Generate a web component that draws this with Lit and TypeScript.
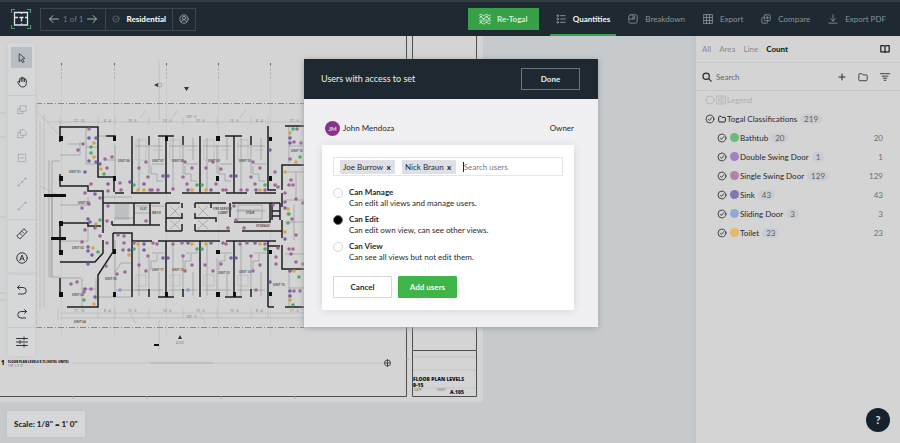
import { LitElement, html, svg, css } from "lit";
import { customElement, state } from "lit/decorators.js";
import { classMap } from "lit/directives/class-map.js";

type Pt = [number, number];

/* ---------- icons ---------- */

const ICONS: Record<string, unknown> = {
  left: svg`<path d="M21 12H3M10 5l-7 7 7 7"/>`,
  right: svg`<path d="M3 12h18M14 5l7 7-7 7"/>`,
  check: svg`<circle cx="12" cy="12" r="9.500"/><path d="M8 12.500l3 3 5.500-7"/>`,
  ring: svg`<circle cx="12" cy="12" r="9.500"/>`,
  user: svg`<circle cx="12" cy="12" r="10"/><circle cx="12" cy="9.500" r="4"/><path d="M5.500 19c1-4 3.500-5 6.500-5s5.500 1 6.500 5"/>`,
  waves: svg`<path d="M1 4c4-5 7 5 11 0s7 5 11 0M1 9.500c4-5 7 5 11 0s7 5 11 0M1 15c4-5 7 5 11 0s7 5 11 0M1 20.500c4-5 7 5 11 0s7 5 11 0"/><circle cx="4" cy="7" r="1"/><circle cx="15" cy="7" r="1"/><circle cx="9" cy="12" r="1"/><circle cx="20" cy="12" r="1"/><circle cx="4" cy="18" r="1"/><circle cx="15" cy="18" r="1"/>`,
  list: svg`<path d="M11 4h11M11 12h11M11 20h11" /><circle cx="4" cy="4" r="2"/><circle cx="4" cy="12" r="2"/><circle cx="4" cy="20" r="2"/>`,
  chart: svg`<rect x="2" y="2" width="20" height="20" rx="4"/><path d="M12 2v10H2M12 12h4V6"/>`,
  grid: svg`<rect x="1.500" y="1.500" width="21" height="21"/><path d="M8.500 1v22M15.500 1v22M1 8.500h22M1 15.500h22"/>`,
  copy: svg`<rect x="8" y="2" width="14" height="14" rx="2"/><path d="M8 8H4a2 2 0 0 0-2 2v10a2 2 0 0 0 2 2h10a2 2 0 0 0 2-2v-4M12 9h6M15 6v6"/>`,
  download: svg`<path d="M12 2v15M6 11l6 6 6-6M2 22h20"/>`,
  book: svg`<path d="M12 5v15M12 5C10 3.500 6 3.500 2 4v15c4-.5 8-.5 10 1 2-1.500 6-1.500 10-1V4c-4-.5-8-.5-10 1z"/>`,
  search: svg`<circle cx="10" cy="10" r="7.500"/><path d="M16 16l6 6"/>`,
  plus: svg`<path d="M12 3v18M3 12h18"/>`,
  folder: svg`<path d="M2 6a2 2 0 0 1 2-2h5l3 3h8a2 2 0 0 1 2 2v10a2 2 0 0 1-2 2H4a2 2 0 0 1-2-2z"/>`,
  filter: svg`<path d="M1 4h22M5 10h14M8 15h8M10 20h4"/>`,
  legend: svg`<rect x="1.500" y="2.500" width="21" height="19"/><path d="M7 7v10M11 7h6M11 12h6M11 17h6"/>`,
  cursor: svg`<path d="M6 2l13 11-6 1 4 7-4 2-3-7-4 4z"/>`,
  hand: svg`<path d="M7 13V6.500a1.700 1.700 0 0 1 3.400 0V4a1.700 1.700 0 0 1 3.400 0v1.500a1.700 1.700 0 0 1 3.400 0V8a1.600 1.600 0 0 1 3.300 0v7c0 4-3 7-7 7-3 0-5-1-7-4l-3-5c-1-2 1.500-3 2.500-1.500L7 13M10.400 6.500V11M13.800 5.500V11M17.200 8v3"/>`,
  shapeA: svg`<path d="M8 2h14v13H8zM8 9H2v12h12v-6"/>`,
  shapeB: svg`<path d="M9 2h8l5 5v8H9zM9 8H2v13h13v-6"/>`,
  minus: svg`<rect x="3" y="3" width="18" height="18" rx="1"/><path d="M7 12h10"/>`,
  line: svg`<path d="M4 20L20 4"/><circle cx="3.500" cy="20.500" r="1.500"/><circle cx="12" cy="12" r="1.500"/><circle cx="20.500" cy="3.500" r="1.500"/>`,
  curve: svg`<path d="M3 20c5 0 5-5 9-8s4-7 9-8"/><circle cx="3.500" cy="20" r="1.500"/><circle cx="20.500" cy="4" r="1.500"/>`,
  ruler: svg`<path d="M16.500 2L22 7.500 7.500 22 2 16.500zM12 7l3 3M8 11l3 3"/>`,
  text: svg`<circle cx="12" cy="12" r="10.500"/><path d="M7.500 17L12 6l4.500 11M9 13.500h6"/>`,
  undo: svg`<path d="M7 3L3 7l4 4M3 7h11a6.500 6.500 0 0 1 0 13H5"/>`,
  redo: svg`<path d="M17 3l4 4-4 4M21 7H10a6.500 6.500 0 0 0 0 13h9"/>`,
  sliders: svg`<path d="M1 5h22M1 12h22M1 19h22M16 2v6M8 9v6M16 16v6"/>`,
};

const icon = (name: string, size: string, weight = "normal") => html`<svg
  class="icon ${size} ${weight}"
  viewBox="0 0 24 24"
  aria-hidden="true"
>
  ${ICONS[name]}
</svg>`;

/* ---------- floor plan ---------- */

const MARKS: { color: string; at: Pt[] }[] = [
  {
    color: "#9a5c93",
    at: [
      [89, 129], [83, 144], [78, 150], [105, 159], [112, 157], [107, 168], [91, 184], [108, 191], [120, 183], [121, 190],
      [85, 193], [100, 198], [89, 204], [82, 208], [108, 206], [150, 190], [146, 162], [139, 168], [148, 177], [158, 190],
      [173, 189], [152, 190], [185, 162], [192, 168], [206, 168], [213, 162], [221, 169], [183, 177], [187, 184], [216, 184],
      [223, 190], [226, 190], [253, 162], [260, 168], [251, 177], [255, 184], [265, 190], [241, 190], [247, 190], [275, 172],
      [275, 185], [278, 187], [297, 129], [294, 142], [301, 143], [290, 159], [291, 180], [285, 193], [289, 185], [293, 185],
      [296, 199], [285, 202], [234, 206], [273, 205], [303, 203], [85, 230], [95, 228], [100, 236], [82, 242], [107, 221],
      [118, 235], [124, 236], [124, 243], [107, 243], [123, 250], [106, 266], [117, 274], [125, 272], [146, 221], [134, 243],
      [153, 243], [157, 244], [148, 256], [139, 265], [146, 271], [71, 284], [77, 282], [84, 292], [91, 289], [173, 244],
      [182, 243], [183, 256], [192, 265], [205, 265], [185, 271], [213, 271], [221, 264], [223, 243], [226, 244], [240, 244],
      [247, 243], [265, 244], [251, 256], [260, 265], [253, 271], [228, 228], [236, 220], [244, 228], [276, 257], [276, 264],
      [278, 248], [292, 219], [296, 235], [289, 249], [293, 249], [291, 254], [296, 262], [303, 264], [294, 291],
      [300, 291], [256, 290],
    ],
  },
  {
    color: "#6b55a3",
    at: [
      [89, 138], [96, 138], [89, 161], [96, 162], [85, 172], [100, 164], [108, 184], [95, 194], [130, 182], [144, 184],
      [163, 176], [168, 176], [188, 190], [211, 190], [231, 176], [236, 176], [256, 190], [270, 150], [290, 138], [290, 143],
      [285, 208], [88, 219], [90, 222], [88, 247], [88, 251], [92, 255], [88, 264], [129, 250], [144, 244], [144, 250],
      [85, 289], [95, 297], [163, 258], [168, 258], [188, 243], [211, 243], [231, 258], [236, 258], [255, 243], [285, 239],
      [290, 291], [290, 296], [290, 271], [270, 282],
    ],
  },
  {
    color: "#d3a03c",
    at: [
      [94, 143], [94, 157], [101, 169], [138, 190], [144, 190], [192, 190], [206, 190], [260, 190], [290, 133], [296, 162],
      [285, 172], [288, 209], [96, 224], [93, 248], [129, 255], [138, 244], [94, 304], [192, 244], [206, 244], [260, 244],
      [288, 214], [285, 232], [294, 271], [290, 300],
    ],
  },
  {
    color: "#3fa857",
    at: [
      [91, 147], [91, 153], [104, 174], [134, 185], [197, 185], [202, 185], [265, 185], [293, 129], [300, 157], [289, 214],
      [100, 220], [98, 252], [134, 249], [84, 300], [197, 249], [202, 249], [265, 249], [288, 223], [299, 277], [293, 305],
    ],
  },
  { color: "#7f97c9", at: [[120, 290], [188, 290]] },
];

const WALLS = [
  "M60 127H98V177H114V192", "M60 126V142M60 174V186H88V191H103V233", "M60 223H88V226H101",
  "M60 223V251M60 262H95L103 253V240", "M113 233H132V297", "M113 233V252L98 275V307H67", "M60 278V297",
  "M132 136V193M166 136V193M200 136V193M234 136V193M268 126V190H276", "M149 136V145M183 136V145M251 136V145",
  "M106 136H115V141M158 136H174M225 136H242", "M115 193H124M131 193H171M182 193H220M226 193H247M255 193H276",
  "M103 203H160M166 203H180M195 203H226M232 203H280", "M134 203V225M150 203V225M112 225H160M112 221V225",
  "M166 203V231H182M195 231H230M242 231H282", "M182 203V208M182 213V219M182 224V231M195 203V208M195 213V219M195 224V231",
  "M195 218H216V222M211 203V208M166 218H182M230 203V217M234 222H270V203M272 203V220M272 211H280M272 216H280M280 203V220",
  "M158 241H220M226 241H276M132 241H152", "M166 241V297M200 241V297M234 241V297M268 241V307",
  "M183 289V297M149 289V297M251 289V297", "M158 297H174M225 297H242", "M285 126H304M282 190V165H304",
  "M282 193V207M282 220V238M282 245V269H304M268 246H280M285 307H304M268 307H274",
];

const BLOCKS: [number, number, number, number][] = [
  [44, 194, 22, 3], [51, 237, 15, 3], [59, 136, 4, 5], [59, 176, 4, 5], [59, 221, 4, 5], [59, 250, 4, 5], [59, 292, 4, 5],
  [113, 136, 3, 5], [113, 176, 3, 5], [113, 249, 3, 5], [113, 292, 3, 5], [216, 136, 4, 5], [216, 176, 3, 5],
  [216, 250, 4, 4], [216, 292, 4, 5], [165, 136, 3, 5], [165, 292, 3, 5], [233, 292, 3, 5], [269, 137, 3, 4],
  [269, 176, 3, 5], [269, 250, 3, 4], [269, 292, 3, 4], [154, 344, 5, 2],
];

const THIN = [
  "M60 155H80V142M60 161H52V277H60M68 144H80M86 127V164H98M86 147H98M98 136H115M115 145V177M104 160H116M116 290H149",
  "M60 205H88M88 197V205M60 241H88V222M82 278V307M60 278H81M82 289H96M96 278V300M115 240V297M115 272L121 263H131M98 297H132",
  "M52 197V237M51 240V278M49 160V277M103 197H132M116 204V220M118 204V220M120 204V220M122 204V220M124 204V220M126 204V220M128 204V220",
  "M114 218H134M134 213H150M260 210H238M238 205H262V219H238ZM236 211H266M170 206L180 216M180 206L170 216M198 206L208 216M208 206L198 216",
  "M170 220L180 229M180 220L170 229M198 220L208 229M208 220L198 229M136 206H148M152 206H164",
  "M289 127V163M289 146H304M289 270V307M289 288H304M285 172H304M285 200H304M285 222H304M285 254H304M296 172V200M294 205V240",
];

const DIM_LINES = [
  "M44 114V308M40 122V310M47 122H304M60 117V125M98 117V125M115 117V125M149 117V125M183 117V125M217 117V125M251 117V125M268 117V125",
  "M58 308V320M60 313H304M60 318H304M98 308V318M115 308V318M149 308V318M183 308V318M217 308V318M251 308V318M268 308V318",
  "M0 113H6M0 137H6M0 217H6M0 293H6M0 300H6M159 60V120M159 320V350M36 110L58 134M40 186L60 196",
  "M140 118L146 110M172 118L178 110M240 118L246 110M130 313L136 324M200 313L206 324",
];

const UNIT_X = [132, 166, 200, 234];
const GRID_X = [61, 114, 166, 218, 270];

const LABELS: [number, number, string][] = [
  [69, 173, "UNIT 01"], [78, 204, "UNIT 02"], [72, 249, "UNIT 03"], [72, 296, "UNIT 04"], [105, 280, "UNIT 05"],
  [118, 162, "UNIT 06"], [152, 162, "UNIT 07"], [172, 162, "UNIT 08"], [208, 162, "UNIT 09"], [239, 162, "UNIT 10"],
  [152, 271, "UNIT 11"], [172, 271, "UNIT 12"], [218, 274, "UNIT 13"], [239, 273, "UNIT 14"], [273, 286, "UNIT 15"],
  [291, 152, "UNIT 16"], [140, 210, "ELEC"], [152, 214, "MECH"], [213, 210, "FIRE SERVICE"], [218, 214, "LOBBY"],
  [246, 214, "STAIR"], [256, 227, "STORAGE"], [74, 323, "UNIT 04"],
];

const DIMENSIONS: [number, string][] = [
  [74, "11' - 10"], [104, "8' - 4"], [128, "13' - 6"], [163, "13' - 6"], [196, "13' - 6"], [230, "13' - 6"],
  [256, "8' - 4"], [290, "11' - 6"],
];

@customElement("plan-sheet")
export class PlanSheet extends LitElement {
  static styles = css`
    :host { display: block; }
    .sheet { display: block; width: 484px; height: 366px; }
    .paper { fill: #d4d4d4; }
    .wall { fill: none; stroke: #1c1e21; stroke-width: 1.5; }
    .block { fill: #0d0f11; }
    .thin { fill: none; stroke: #8c8e91; stroke-width: 0.6; }
    .dim { fill: none; stroke: #b0b1b3; stroke-width: 0.6; }
    .axis { stroke: #a9aaac; stroke-width: 0.7; stroke-dasharray: 3 1; }
    .axis-faint { stroke: #c6c7c8; stroke-width: 0.7; }
    .border { fill: none; stroke: #4c4f52; stroke-width: 1; }
    .property { fill: none; stroke: #cf6a66; stroke-width: 1; stroke-dasharray: 6 2 1 2; }
    .property-side { fill: none; stroke: #dab4b3; stroke-width: 1; stroke-dasharray: 6 2; }
    .label { font: 700 3px "Open Sans", sans-serif; fill: #55575a; }
    .measure { font: 600 3px "Open Sans", sans-serif; fill: #85878a; }
    .title { font: 800 5px "Open Sans", sans-serif; fill: #111; }
    .caption { font: 800 3px "Open Sans", sans-serif; fill: #111; }
    .number { font: 800 6px "Open Sans", sans-serif; fill: #111; }
    .ink { fill: #333; }
    .rule { stroke: #9b9c9e; stroke-width: 0.8; }
    .rule-faint { stroke: #bfc0c1; stroke-width: 0.8; }
  `;

  private unit(x: number) {
    return svg`
      <path class="thin" d=${`M${x + 17} 145V174M${x + 3} 146H${x + 31}M${x + 7} 138V190M${x + 27} 138V160M${x + 20} 164H${x + 32}M${x + 19} 174H${x + 25}V181H${x + 31}M${x + 19} 166V174`} />
      <path class="thin" d=${`M${x + 17} 258V290M${x + 3} 290H${x + 31}M${x + 7} 244V296M${x + 27} 272V296M${x + 20} 253H${x + 32}M${x + 19} 261H${x + 25}V254M${x + 19} 261V270`} />
      <path class="dim" d=${`M${x + 4} 140H${x + 14}V160H${x + 4}ZM${x + 21} 150H${x + 30}M${x + 4} 275H${x + 14}V286H${x + 4}Z`} />`;
  }

  render() {
    return html`
      <svg class="sheet" viewBox="0 36 484 366" role="img" aria-label="Floor plan">
        <rect class="paper" x="0" y="36" width="483" height="366" />
        ${GRID_X.map(
          (x) => svg`<path class="axis" d=${`M${x + 0.5} 64V80`} /><path class="axis-faint" d=${`M${x + 0.5} 80V336`} />
            <circle class="ink" cx=${x + 0.5} cy="64" r="0.7" />`
        )}
        ${DIM_LINES.map((d) => svg`<path class="dim" d=${d} />`)}
        <path class="property" d="M36 103.500H304M36 327.500H304" />
        <path class="property-side" d="M36.500 103V327" />
        ${THIN.map((d) => svg`<path class="thin" d=${d} />`)}
        ${UNIT_X.map((x) => this.unit(x))}
        ${WALLS.map((d) => svg`<path class="wall" d=${d} />`)}
        ${BLOCKS.map(([x, y, w, h]) => svg`<rect class="block" x=${x} y=${y} width=${w} height=${h} />`)}
        ${LABELS.map(([x, y, t]) => svg`<text class="label" x=${x} y=${y}>${t}</text>`)}
        ${DIMENSIONS.map(
          ([x, t]) => svg`<text class="measure" x=${x} y="122">${t}</text><text class="measure" x=${x} y="312">${t}</text>`
        )}
        <text class="measure" x="186" y="118">105' - 5</text>
        <text class="measure" x="186" y="318">105' - 5</text>
        ${MARKS.map(
          (group) => svg`<g fill=${group.color}>${group.at.map(([x, y]) => svg`<circle cx=${x} cy=${y} r="1.800" opacity="0.9" />`)}</g>`
        )}
        <path class="ink" d="M184 87h5l-2.500 4zM154 85l4-2v4zM178 339l2-4 2 4z" />
        <circle class="thin" cx="160" cy="85" r="2" />
        <text class="measure" x="176" y="344">A-301</text>
        <path class="rule" d="M150 363H213" />
        <path class="rule-faint" d="M72 363H386" />
        <path class="border" d="M0 396.500H406.500V36M412.500 36V350M476.500 36V350M412.500 350.500H476.500V396.500H412.500Z" />
        <path class="rule-faint" d="M413 357H476M413 370H476M413 388H476" />
        <path class="rule" d="M73 396V399M147 396V399M221 396V399M295 396V399M406 359H409" />
        <circle class="border" cx="387.500" cy="363" r="3" />
        <path class="border" d="M387.500 359V367M385 363H390" />
        <text class="number" x="1" y="365">1</text>
        <text class="caption" x="8" y="363">FLOOR PLAN LEVELS 9-15 (HOTEL UNITS)</text>
        <text class="measure" x="8" y="367">1/8" = 1'-0"</text>
        <text class="title" x="413" y="381">FLOOR PLAN LEVELS</text>
        <text class="title" x="413" y="387">9-15</text>
        <text class="measure" x="414" y="391">DATE</text>
        <text class="measure" x="437" y="391">SHEET</text>
        <text class="title" x="450" y="394">A.105</text>
      </svg>
    `;
  }
}

/* ---------- application ---------- */

const CLASSES = [
  { name: "Bathtub", count: 20, color: "#70b87a" },
  { name: "Double Swing Door", count: 1, color: "#a280c4" },
  { name: "Single Swing Door", count: 129, color: "#b57fb0" },
  { name: "Sink", count: 43, color: "#8078b4" },
  { name: "Sliding Door", count: 3, color: "#92a8d8" },
  { name: "Toilet", count: 23, color: "#e3b868" },
];

const ROLES = [
  { id: "manage", name: "Can Manage", note: "Can edit all views and manage users." },
  { id: "edit", name: "Can Edit", note: "Can edit own view, can see other views." },
  { id: "view", name: "Can View", note: "Can see all views but not edit them." },
];

const NAV = [
  { name: "Quantities", icon: "list", active: true },
  { name: "Breakdown", icon: "chart" },
  { name: "Export", icon: "grid" },
  { name: "Compare", icon: "copy" },
  { name: "Export PDF", icon: "download" },
];

@customElement("app-root")
export class AppRoot extends LitElement {
  @state() private role = "edit";
  @state() private users = ["Joe Burrow", "Nick Braun"];

  static styles = css`
    :host {
      display: flex;
      flex-direction: column;
      min-height: 100vh;
      position: relative;
      overflow: hidden;
      font: 400 8px/12px Lato, "Open Sans", sans-serif;
      color: #26292d;
      background: #c6cacd;
    }
    * { box-sizing: border-box; }
    button, input { font: inherit; color: inherit; margin: 0; padding: 0; border: 0; background: none; border-radius: 0; outline: 0; }
    button { cursor: pointer; display: flex; align-items: center; justify-content: center; }
    a { color: inherit; text-decoration: none; }
    ul { list-style: none; margin: 0; padding: 0; }

    .icon { display: block; flex: none; fill: none; stroke: currentColor; stroke-width: 2; stroke-linecap: round; stroke-linejoin: round; }
    .s8 { width: 8px; height: 8px; }
    .s10 { width: 10px; height: 10px; }
    .s12 { width: 12px; height: 12px; }
    .thick { stroke-width: 3; }

    .top { display: flex; align-items: stretch; height: 36px; padding: 0 14px 0 10px; background: #1e2932; border-top: 2px solid #333b43; color: #8b949a; }
    .logo { width: 22px; height: 22px; align-self: center; margin-right: 8px; }
    .crumbs { display: flex; align-self: center; height: 23px; border: 1px solid #3b474f; color: #a9b0b5; }
    .crumb { display: flex; align-items: center; justify-content: center; gap: 3px; padding: 0 7px; }
    .crumb + .crumb { border-left: 1px solid #3b474f; gap: 6px; padding: 0 6px; }
    .pages { color: #6f7a82; }
    .dim { color: #6f7a82; display: flex; }
    .set { color: #f2f4f5; font-weight: 900; }
    .spacer { flex: 1; }
    .retogal { align-self: center; width: 71px; height: 22px; gap: 6px; background: #36a146; color: #d6ecd9; font-weight: 700; margin-right: 11px; }
    .nav { display: flex; gap: 6px; margin-right: -6px; }
    .nav-link { display: flex; align-items: center; gap: 7px; padding: 2px 6px 0; border-bottom: 2px solid transparent; }
    .nav-link.active { color: #f5f7f8; border-color: #3aa14b; font-weight: 700; }
    .nav-link.active .icon { color: #9aa3a9; }

    .work { flex: 1; display: flex; min-height: 0; }
    .canvas { flex: 1; position: relative; overflow: hidden; border-right: 4px solid #c0c6ca; }
    .sheet { position: absolute; left: 0; top: 0; }
    .tools { position: absolute; left: 8px; top: 7px; width: 27px; display: flex; flex-direction: column; gap: 3px; }
    .panel { display: flex; flex-direction: column; align-items: center; gap: 3px; padding: 4px 0; background: #d5d7d9; box-shadow: 0 0 5px #c0c9cd; }
    .tool { width: 21px; height: 21px; color: #33373c; }
    .tool.active { background: #b9bec5; }
    .tool.off { color: #a4a7ab; }
    .sep { width: 100%; height: 1px; background: #c6c9cc; }
    .scale { position: absolute; left: 7px; bottom: 6px; padding: 7px; font-weight: 900; background: #d6d7d8; box-shadow: 0 0 3px #b9bfc3; }

    .side { width: 204px; flex: none; background: #d4d4d4; }
    .tabs { display: flex; align-items: center; gap: 8px; height: 27px; padding: 0 10px 0 6px; border-bottom: 1px solid #cacbcc; color: #888b8f; }
    .tabs .on { color: #1b1e21; font-weight: 900; }
    .tabs button { color: #1b1e21; }
    .find { display: flex; align-items: center; height: 28px; gap: 12px; padding: 0 10px 0 6px; border-bottom: 1px solid #c6c7c8; }
    .find-box { flex: 1; display: flex; align-items: center; gap: 4px; }
    .find-box input { width: 100%; }
    .find-box input::placeholder { color: #64676b; opacity: 1; }
    .rows { padding: 0 17px 0 9px; }
    .row { display: flex; align-items: center; gap: 3px; height: 19px; }
    .row.legend { color: #aeb0b3; gap: 1px; height: 18px; }
    .row.child { padding-left: 12px; }
    .name { white-space: nowrap; }
    .group { display: flex; align-items: center; gap: 1px; }
    .swatch { width: 9px; height: 9px; border-radius: 50%; }
    .pill { padding: 0 4px; border-radius: 5px; line-height: 10px; background: #cbccd1; color: #5d6166; }
    .total { margin-left: auto; color: #6d7074; }
    .help { position: absolute; right: 10px; bottom: 11px; width: 24px; height: 24px; border-radius: 50%; background: #15222b; color: #dfe4e7; font-size: 11px; font-weight: 700; box-shadow: 0 0 3px #c5d2da; }

    .overlay { position: absolute; left: 0; right: 0; top: 59px; margin-left: 2px; display: flex; justify-content: center; pointer-events: none; }
    .modal { width: 294px; background: #f0f0f3; box-shadow: 0 1px 6px #9aa0a5; pointer-events: auto; }
    .modal-head { display: flex; align-items: center; justify-content: space-between; height: 40px; padding: 0 18px 0 17px; background: #1d2830; color: #eceef0; }
    .heading { margin: 0; font-size: 9px; font-weight: 400; }
    .done { width: 59px; height: 22px; border: 1px solid #6b757c; font-weight: 700; }
    .modal-body { padding: 21px 24px 17px 18px; }
    .owner { display: flex; align-items: center; gap: 3px; height: 16px; margin-left: 3px; margin-bottom: 9px; }
    .avatar { width: 15px; height: 15px; border-radius: 50%; background: #86338f; color: #e9d7ec; font-size: 6px; font-weight: 700; line-height: 15px; text-align: center; }
    .right { margin-left: auto; }
    .card { background: #fff; padding: 12px 11px; box-shadow: 0 1px 8px #d3d3da; }
    .field { display: flex; align-items: center; height: 19px; gap: 7px; padding: 0 6px; border: 1px solid #e6e6ea; margin-bottom: 11px; }
    .chip { display: flex; align-items: center; gap: 3px; height: 14px; padding: 0 4px 0 3px; background: #dfdfe5; border-radius: 1px; white-space: nowrap; }
    .chip button { width: 5px; font-weight: 900; line-height: 12px; }
    .entry { flex: 1; display: flex; align-items: center; min-width: 0; }
    .caret { width: 1px; height: 10px; background: #222; }
    .entry input { flex: 1; min-width: 0; }
    .entry input::placeholder { color: #77797e; opacity: 1; }
    .roles { border: 0; margin: 0; padding: 0; display: flex; flex-direction: column; gap: 5px; }
    .role { display: grid; grid-template-columns: 10px 1fr; column-gap: 6px; line-height: 11px; }
    .role input { appearance: none; width: 10px; height: 10px; border: 1px solid #d5d5da; border-radius: 50%; background: #fff; align-self: center; }
    .role input:checked { background: #000; border-color: #777; }
    .role strong { font-weight: 700; }
    .note { grid-column: 2; }
    .actions { display: flex; gap: 6px; margin-top: 13px; }
    .btn { width: 59px; height: 22px; border: 1px solid #d6d6db; border-radius: 1px; background: #fff; font-weight: 700; }
    .btn.primary { background: #3fb549; border-color: #3fb549; color: #f2fbf3; }
  `;

  private tool(name: string, label: string, kind = "") {
    return html`<button class=${classMap({ tool: true, active: kind === "active", off: kind === "off" })} aria-label=${label}>
      ${icon(name, kind ? "s10" : "s12")}
    </button>`;
  }

  private renderTop() {
    return html`<header class="top">
      <svg class="logo" viewBox="0 0 22 22" role="img" aria-label="Togal">
        <path d="M5 1.500H1.500V5M17 1.500h3.500V5M5 20.500H1.500V17M17 20.500h3.500V17" fill="none" stroke="#3f9f6b" stroke-width="1.200" />
        <path d="M4.500 4.500h13v12.500h-13zM4.500 9.500H8M9.500 9.500h4M15 9.500h2.500M11.500 9.500v4M11.500 15.500V17M11.500 4.500V6" fill="none" stroke="#dfe5e8" stroke-width="1.300" />
      </svg>
      <div class="crumbs">
        <div class="crumb">${icon("left", "s12")}<span class="pages">1 of 1</span>${icon("right", "s12")}</div>
        <div class="crumb"><span class="dim">${icon("check", "s8")}</span><span class="set">Residential</span></div>
        <div class="crumb">${icon("user", "s10")}</div>
      </div>
      <span class="spacer"></span>
      <button class="retogal">${icon("waves", "s12")}Re-Togal</button>
      <nav class="nav">
        ${NAV.map(
          (n) => html`<a href="#" class=${classMap({ "nav-link": true, active: !!n.active })}>${icon(n.icon, "s10")}${n.name}</a>`
        )}
      </nav>
    </header>`;
  }

  private renderTools() {
    return html`<div class="tools">
      <div class="panel">
        ${this.tool("cursor", "Select", "active")} ${this.tool("hand", "Pan")}
        <span class="sep"></span>
        ${this.tool("shapeA", "Area", "off")} ${this.tool("shapeB", "Polygon", "off")} ${this.tool("minus", "Subtract", "off")}
        ${this.tool("line", "Line", "off")} ${this.tool("curve", "Curve", "off")}
        <span class="sep"></span>
        ${this.tool("ruler", "Measure")} ${this.tool("text", "Annotate")}
      </div>
      <div class="panel">
        ${this.tool("undo", "Undo")} ${this.tool("redo", "Redo")}
        <span class="sep"></span>
        ${this.tool("sliders", "Settings")}
      </div>
    </div>`;
  }

  private renderSide() {
    return html`<aside class="side">
      <div class="tabs">
        <a href="#">All</a><a href="#">Area</a><a href="#">Line</a><a href="#" class="on">Count</a>
        <span class="spacer"></span>
        <button aria-label="Library">${icon("book", "s10", "thick")}</button>
      </div>
      <div class="find">
        <label class="find-box">${icon("search", "s10", "thick")}<input type="text" placeholder="Search" aria-label="Search" /></label>
        <button aria-label="Add">${icon("plus", "s8", "thick")}</button>
        <button aria-label="New folder">${icon("folder", "s10")}</button>
        <button aria-label="Filter">${icon("filter", "s10")}</button>
      </div>
      <ul class="rows">
        <li class="row legend">${icon("ring", "s10")}${icon("legend", "s10")}<span>Legend</span></li>
        <li class="row">
          ${icon("check", "s10")}
          <span class="group">${icon("folder", "s8", "thick")}<span>Togal Classifications</span></span>
          <span class="pill">219</span>
        </li>
        ${CLASSES.map(
          (c) => html`<li class="row child">
            ${icon("check", "s10")}
            <span class="group"><span class="swatch" style="background:${c.color}"></span><span class="name">${c.name}</span></span>
            <span class="pill">${c.count}</span><span class="total">${c.count}</span>
          </li>`
        )}
      </ul>
    </aside>`;
  }

  private renderModal() {
    return html`<div class="overlay">
      <section class="modal" role="dialog" aria-labelledby="heading">
        <div class="modal-head"><h2 class="heading" id="heading">Users with access to set</h2><button class="done">Done</button></div>
        <div class="modal-body">
          <div class="owner"><span class="avatar">JM</span><span>John Mendoza</span><span class="right">Owner</span></div>
          <div class="card">
            <div class="field">
              ${this.users.map(
                (u) => html`<span class="chip">${u}<button
                    aria-label="Remove ${u}"
                    @click=${() => (this.users = this.users.filter((x) => x !== u))}
                  >x</button></span>`
              )}
              <span class="entry"><span class="caret"></span><input type="text" placeholder="Search users" aria-label="Search users" /></span>
            </div>
            <fieldset class="roles" aria-label="Access">
              ${ROLES.map(
                (r) => html`<label class="role">
                  <input type="radio" name="role" .checked=${this.role === r.id} @change=${() => (this.role = r.id)} />
                  <strong>${r.name}</strong><span class="note">${r.note}</span>
                </label>`
              )}
            </fieldset>
            <div class="actions"><button class="btn">Cancel</button><button class="btn primary">Add users</button></div>
          </div>
        </div>
      </section>
    </div>`;
  }

  render() {
    return html`
      ${this.renderTop()}
      <main class="work">
        <div class="canvas">
          <plan-sheet class="sheet"></plan-sheet>
          ${this.renderTools()}
          <div class="scale">Scale: 1/8" = 1' 0"</div>
        </div>
        ${this.renderSide()}
      </main>
      <button class="help" aria-label="Help">?</button>
      ${this.renderModal()}
    `;
  }
}
